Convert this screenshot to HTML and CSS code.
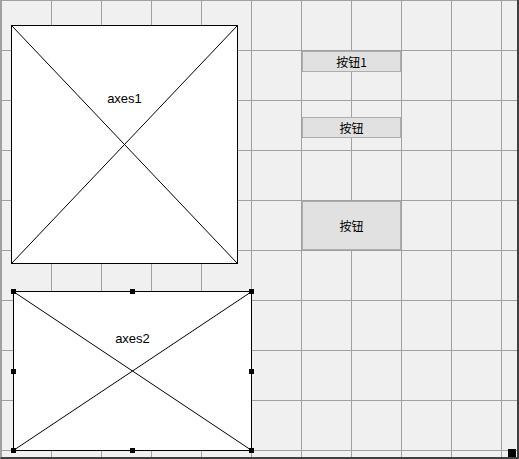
FILE: index.html
```html
<!DOCTYPE html>
<html>

<head>
    <title>GUIDE Layout</title>
    <link rel="stylesheet" href="styles.css">
</head>

<body>
    <div class="canvas">
        <div class="axes axes1">
            <svg class="cross" viewBox="0 0 100 100" preserveAspectRatio="none">
                <line x1="0" y1="0" x2="100" y2="100" />
                <line x1="100" y1="0" x2="0" y2="100" />
            </svg>
            <div class="label">axes1</div>
        </div>

        <div class="axes axes2 selected">
            <svg class="cross" viewBox="0 0 100 100" preserveAspectRatio="none">
                <line x1="0" y1="0" x2="100" y2="100" />
                <line x1="100" y1="0" x2="0" y2="100" />
            </svg>
            <div class="label">axes2</div>
            <span class="handle tl"></span>
            <span class="handle tm"></span>
            <span class="handle tr"></span>
            <span class="handle ml"></span>
            <span class="handle mr"></span>
            <span class="handle bl"></span>
            <span class="handle bm"></span>
            <span class="handle br"></span>
        </div>

        <button class="push btn1">按钮1</button>
        <button class="push btn2">按钮</button>
        <button class="push btn3">按钮</button>

        <span class="resize-grip"></span>
    </div>
</body>

</html>
```

FILE: styles.css
```css
* {
    box-sizing: border-box;
}

body {
    margin: 0;
    background: #f0f0f0;
    font-family: "Liberation Sans", "Noto Sans CJK SC", sans-serif;
}

.canvas {
    position: relative;
    width: 519px;
    height: 459px;
    background-color: #f0f0f0;
    background-image:
        linear-gradient(to right, #a0a0a0 1px, transparent 1px),
        linear-gradient(to bottom, #a0a0a0 1px, transparent 1px);
    background-size: 50px 50px;
    border-left: 1px solid #a0a0a0;
    border-right: 2px solid #404040;
    border-bottom: 2px solid #404040;
}

/* axes placeholders */
.axes {
    position: absolute;
    background: white;
    border: 1px solid black;
}

.axes1 {
    left: 10px;
    top: 25px;
    width: 227px;
    height: 239px;
}

.axes2 {
    left: 12px;
    top: 291px;
    width: 239px;
    height: 160px;
}

.cross {
    position: absolute;
    top: 0;
    left: 0;
    width: 100%;
    height: 100%;
}

.cross line {
    stroke: black;
    stroke-width: 1;
    vector-effect: non-scaling-stroke;
}

.label {
    position: relative;
    text-align: center;
    font-size: 13px;
    line-height: 14px;
    color: black;
}

.axes1 .label {
    padding-top: 66px;
}

.axes2 .label {
    padding-top: 40px;
}

/* selection handles */
.handle {
    position: absolute;
    width: 5px;
    height: 5px;
    background: black;
}

.handle.tl { left: -3px; top: -3px; }
.handle.tm { left: 116px; top: -3px; }
.handle.tr { right: -3px; top: -3px; }
.handle.ml { left: -3px; top: 77px; }
.handle.mr { right: -3px; top: 77px; }
.handle.bl { left: -3px; bottom: -3px; }
.handle.bm { left: 116px; bottom: -3px; }
.handle.br { right: -3px; bottom: -3px; }

/* push buttons */
.push {
    position: absolute;
    left: 301px;
    width: 99px;
    padding: 0;
    margin: 0;
    background: #e1e1e1;
    border: 1px solid #adadad;
    border-radius: 0;
    font-family: "Noto Sans CJK SC", sans-serif;
    font-size: 12px;
    color: black;
}

.btn1 {
    top: 51px;
    height: 21px;
}

.btn2 {
    top: 117px;
    height: 21px;
}

.btn3 {
    top: 201px;
    height: 49px;
}

.resize-grip {
    position: absolute;
    left: 507px;
    top: 449px;
    width: 8px;
    height: 8px;
    background: black;
}
```
